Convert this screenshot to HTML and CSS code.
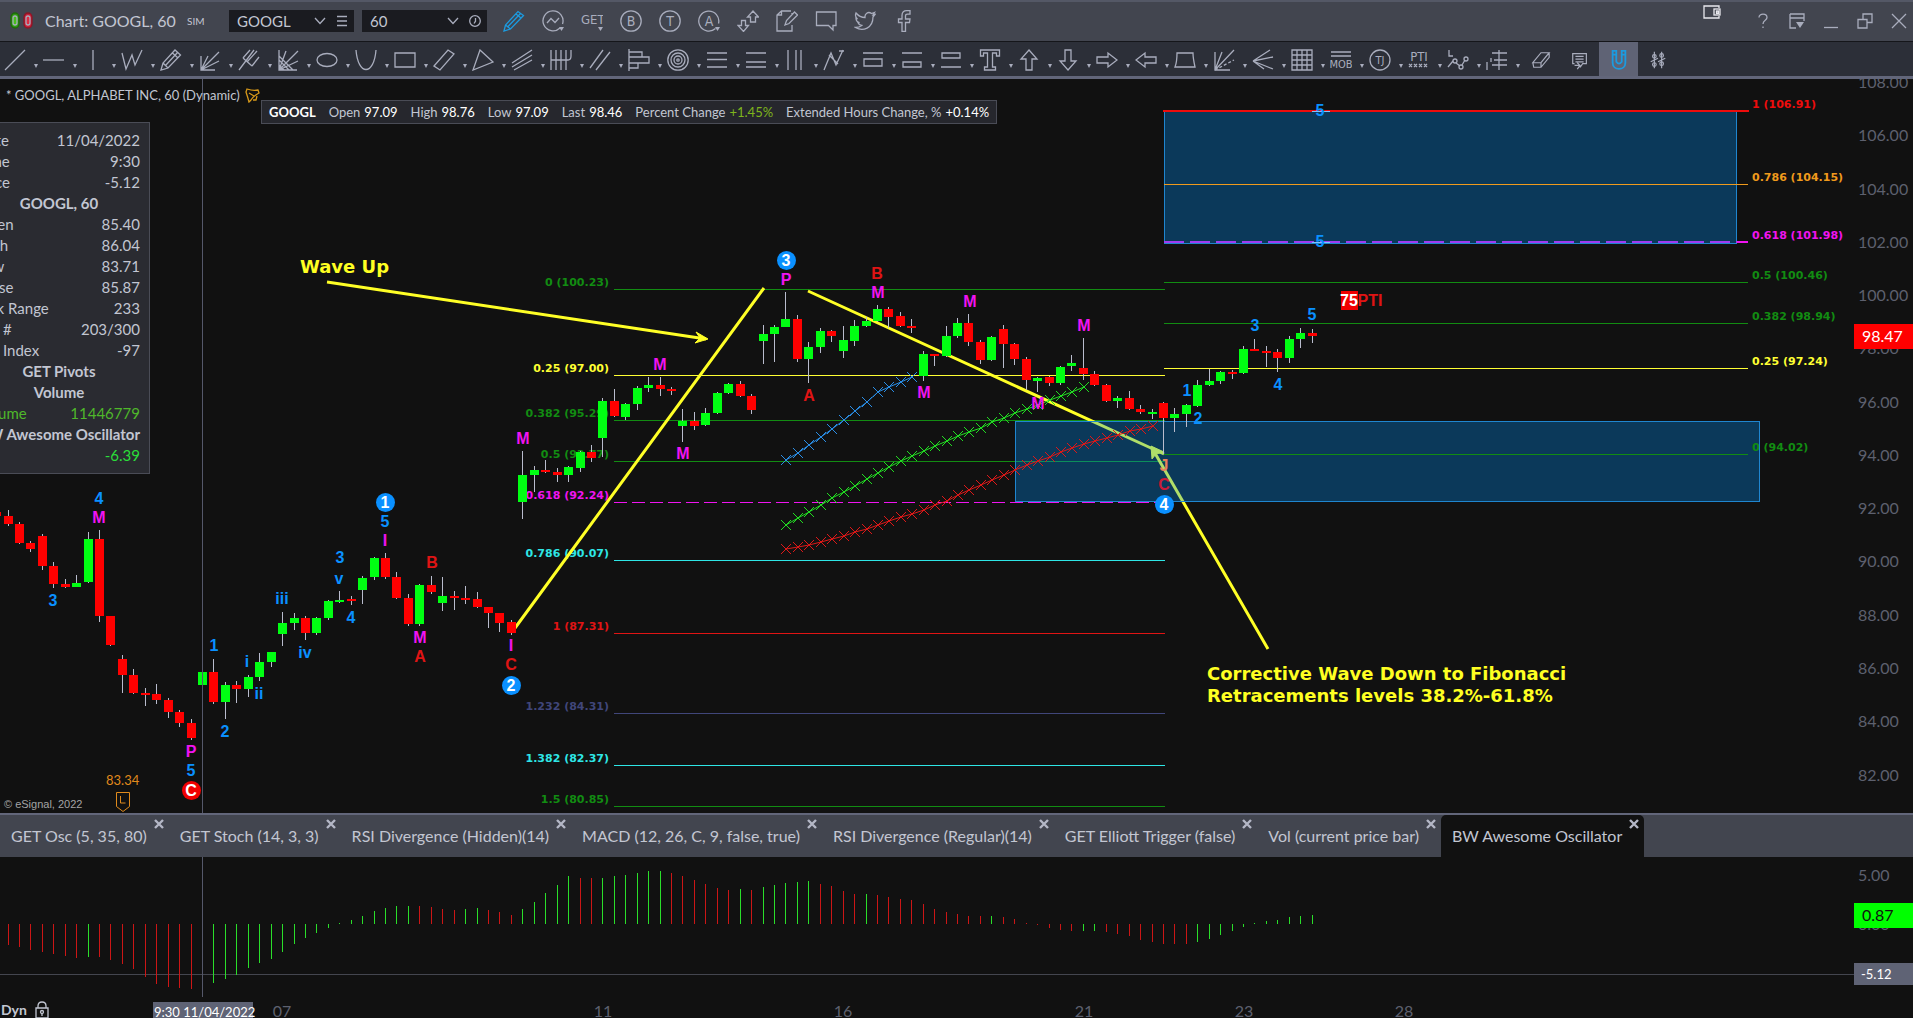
FILE: index.html
```
<!DOCTYPE html>
<html lang="en">
<head>
<meta charset="utf-8">
<title>Chart: GOOGL, 60</title>
<link rel="stylesheet" href="styles.css">
</head>
<body>
<header class="titlebar">
  <svg class="link-pills" viewBox="0 0 24 18" aria-hidden="true">
    <rect x="1" y="1" width="8" height="15" rx="4" fill="#2f9a12" stroke="#1d6a0a"/><rect x="3" y="4" width="4" height="9" rx="2" fill="#48c01c"/>
    <rect x="14" y="1" width="8" height="15" rx="4" fill="#c81e38" stroke="#8a1626"/><rect x="16" y="4" width="4" height="9" rx="2" fill="#e02a42"/>
  </svg>
  <h1 class="title">Chart: GOOGL, 60</h1>
  <span class="sim">SIM</span>
  <div class="picker symbol">
    <select aria-label="Symbol"><option>GOOGL</option></select>
    <svg class="chev" viewBox="0 0 12 8"><path d="M1 1l5 5.500 5-5.500"/></svg>
    <svg class="mini" viewBox="0 0 12 12"><path d="M1 1.500h10M1 6h10M1 10.500h10"/></svg>
  </div>
  <div class="picker interval">
    <select aria-label="Interval"><option>60</option></select>
    <svg class="chev" viewBox="0 0 12 8"><path d="M1 1l5 5.500 5-5.500"/></svg>
    <svg class="mini" viewBox="0 0 12 12"><circle cx="6" cy="6" r="5.300"/><path d="M6.500 3v3.200L5 8.500"/></svg>
  </div>
  <div class="actions">
    <button class="icon on" aria-label="Draw"><svg viewBox="0 0 22 22"><path d="M1 21l1.500-6L15 1.500l5.500 4L7.500 19zM2.500 15l5 4M5 16.500L17.500 3.500M13 4l5 4"/></svg></button>
    <button class="icon" aria-label="Studies"><svg viewBox="0 0 22 22"><path d="M18 18a10 10 0 1 1 2.500-4M5 13l4-4.500 4 4 4-4.500"/><path class="f" d="M17 17h5l-2.500 4z"/></svg></button>
    <button class="icon" aria-label="GET"><svg viewBox="0 0 22 22"><text x="0" y="14" font-size="13">GET</text><path class="f" d="M17 17h5l-2.500 4z"/></svg></button>
    <button class="icon" aria-label="Buy"><svg viewBox="0 0 22 22"><circle cx="11" cy="11" r="10.200"/><text x="11" y="16" font-size="14" text-anchor="middle">B</text></svg></button>
    <button class="icon" aria-label="Trade"><svg viewBox="0 0 22 22"><circle cx="11" cy="11" r="10.200"/><text x="11" y="16" font-size="14" text-anchor="middle">T</text></svg></button>
    <button class="icon" aria-label="Alerts"><svg viewBox="0 0 22 22"><path d="M17.500 18.500a10 10 0 1 1 3-5"/><text x="11" y="16" font-size="14" text-anchor="middle">A</text><path class="f" d="M17 17h5l-2.500 4z"/></svg></button>
    <button class="icon" aria-label="Orders"><svg viewBox="0 0 22 22"><path d="M13.500 12V7H10.500L16 1l5.500 6H18.500v5zM4.500 10.500h4v5h3L6.500 21.500 1 15.500h3.500z"/></svg></button>
    <button class="icon" aria-label="Notes"><svg viewBox="0 0 22 22"><path d="M10 1H5.500L1 5v16h15v-6M5.500 1v4H1M16 3v1M10 1h5M9 15l1.500-4.500L18.500 2 21.500 5 13 13.500z"/></svg></button>
    <button class="icon" aria-label="Chat"><svg viewBox="0 0 22 22"><path d="M1.500 2h19.500v13.500h-3v4.500l-4.500-4.500h-12z"/></svg></button>
    <button class="icon" aria-label="Twitter"><svg viewBox="0 0 22 22"><path d="M21 4.500l-2 .5 1.500-2.500-3 1C14 1 10.500 4 11 7.500 7.500 7.500 4.500 6 2 3c-1 2.500-.5 4.500 1.500 6L2 8.500c0 2 1.500 3.500 3.500 4.200H4c.6 1.500 2 2.500 3.700 2.800C6 17 4 17.500 1.500 17.500 9 22 19 18 19 7z"/></svg></button>
    <button class="icon" aria-label="Facebook"><svg viewBox="0 0 22 22"><path d="M9 21.500v-9H5.500V9H9V5.500C9 2 11 .7 13.500.7H17v3.500h-2.500c-1.500 0-2 .6-2 1.800v3H17l-.5 3.500h-4v9z"/></svg></button>
  </div>
  <svg class="detach" viewBox="0 0 18 14"><path d="M16 3V1H1v12h15v-2"/><rect x="11" y="4" width="6" height="6"/><rect x="13.500" y="6" width="2" height="2.500"/></svg>
  <div class="window">
    <button class="icon" aria-label="Help"><svg viewBox="0 0 16 16"><path d="M4 4.500C4 0 12 0 12 4.500 12 7.500 8 7 8 11M8 13.500V15"/></svg></button>
    <button class="icon" aria-label="Menu"><svg viewBox="0 0 16 16"><path d="M1 1h14v7M1 1v14h6M1 5h14"/><path class="f" d="M7 9h8l-4 6z"/></svg></button>
    <button class="icon" aria-label="Minimize"><svg viewBox="0 0 16 16"><path d="M1 14.500h14"/></svg></button>
    <button class="icon" aria-label="Restore"><svg viewBox="0 0 16 16"><path d="M1 6.500h9V15H1zM6 6.500V1h9v8.500h-5"/></svg></button>
    <button class="icon" aria-label="Close"><svg viewBox="0 0 16 16"><path d="M1 1l14 14M15 1L1 15"/></svg></button>
  </div>
</header>

<nav class="tools" aria-label="Drawing tools">
  <button class="tool" aria-label="Line"><svg viewBox="0 0 22 22"><path d="M1 21L21 1"/></svg></button>
  <button class="tool" aria-label="Horizontal line"><svg viewBox="0 0 22 22"><path d="M0 11h21"/></svg></button>
  <button class="tool" aria-label="Vertical line"><svg viewBox="0 0 22 22"><path d="M11 1v20"/></svg></button>
  <button class="tool" aria-label="Polyline"><svg viewBox="0 0 22 22"><path d="M1 4l4 16 6-14 3 10L21 1"/></svg></button>
  <button class="tool" aria-label="Freehand"><svg viewBox="0 0 22 22"><path d="M1 21l2-7L15 1l5.500 5L8 19zM3 14l5 5M5.500 16.500L17.500 3.500M12.500 4l5.500 5"/></svg></button>
  <button class="tool" aria-label="Gann fan"><svg viewBox="0 0 22 22"><path d="M2 7v14h14M2 21L9 7M2 21L20 3M2 21l18-9"/></svg></button>
  <button class="tool" aria-label="Pitchfork"><svg viewBox="0 0 22 22"><path d="M1 21L16 1M5 9l9 8M5 9L12 1M14 17l7-9M9 13L19 2"/></svg></button>
  <button class="tool" aria-label="Speed fan"><svg viewBox="0 0 22 22"><path d="M2 1v20h18M2 21L9 2M2 21L21 2M2 21l19-9M2 16l5 5M2 11l10 10M2 7l14 14"/></svg></button>
  <button class="tool" aria-label="Ellipse"><svg viewBox="0 0 22 22"><ellipse cx="11" cy="11" rx="10" ry="6.500"/></svg></button>
  <button class="tool" aria-label="Parabola"><svg viewBox="0 0 22 22"><path d="M1 1C3 27 19 27 21 1"/></svg></button>
  <button class="tool" aria-label="Rectangle"><svg viewBox="0 0 22 22"><path d="M1 4h20v14H1z"/></svg></button>
  <button class="tool" aria-label="Channel box"><svg viewBox="0 0 22 22"><path d="M1 17L15 1l6 4L7 21z"/></svg></button>
  <button class="tool" aria-label="Triangle"><svg viewBox="0 0 22 22"><path d="M8 1l13 12L1 21z"/></svg></button>
  <button class="tool" aria-label="Regression"><svg viewBox="0 0 22 22"><path d="M1 14L21 1M1 18L21 6M3 21L21 11"/></svg></button>
  <button class="tool" aria-label="Cycles"><svg viewBox="0 0 22 22"><path d="M1 1v20M6 1v20M11 1v20M16 1v20M1 11h17q3 0 3-4V1"/></svg></button>
  <button class="tool" aria-label="Parallel lines"><svg viewBox="0 0 22 22"><path d="M1 19L14 1M7 21L21 3"/></svg></button>
  <button class="tool" aria-label="Profile"><svg viewBox="0 0 22 22"><path d="M1 0v22M1 3h13v5H1M1 8h20v6H1M1 14h9v5H1"/></svg></button>
  <button class="tool" aria-label="Circles"><svg viewBox="0 0 22 22"><circle cx="11" cy="11" r="10.200"/><circle cx="11" cy="11" r="7"/><circle cx="11" cy="11" r="4"/><circle cx="11" cy="11" r="1.200"/></svg></button>
  <button class="tool" aria-label="Retracement"><svg viewBox="0 0 22 22"><path d="M1 4h20M1 10.500h20M1 18h20"/></svg></button>
  <button class="tool" aria-label="Extension"><svg viewBox="0 0 22 22"><path d="M1 4h20M1 13h20M1 18h20"/></svg></button>
  <button class="tool" aria-label="Time zones"><svg viewBox="0 0 22 22"><path d="M4 1v20M12 1v20M17 1v20"/></svg></button>
  <button class="tool" aria-label="Zigzag"><svg viewBox="0 0 22 22"><path d="M1 21L8 4l5 12L20 1M6 6l9 9M16 2h5"/></svg></button>
  <button class="tool" aria-label="Projection one"><svg viewBox="0 0 22 22"><path d="M1 4h20M2 10h18v7H2z"/></svg></button>
  <button class="tool" aria-label="Projection two"><svg viewBox="0 0 22 22"><path d="M1 4h20M2 13h18v5H2z"/></svg></button>
  <button class="tool" aria-label="Projection three"><svg viewBox="0 0 22 22"><path d="M2 4h18v5H2zM1 18h20"/></svg></button>
  <button class="tool" aria-label="Text"><svg viewBox="0 0 22 22"><path d="M1.500 1h19v6h-3V4h-4v14h3v3h-11v-3h3V4h-4v3h-3z"/></svg></button>
  <button class="tool" aria-label="Up arrow"><svg viewBox="0 0 22 22"><path d="M11 1l8 9h-5v11H8V10H3z"/></svg></button>
  <button class="tool" aria-label="Down arrow"><svg viewBox="0 0 22 22"><path d="M11 21l8-9h-5V1H8v11H3z"/></svg></button>
  <button class="tool" aria-label="Right arrow"><svg viewBox="0 0 22 22"><path d="M21 11l-9-7v4H1v6h11v4z"/></svg></button>
  <button class="tool" aria-label="Left arrow"><svg viewBox="0 0 22 22"><path d="M1 11l9-7v4h11v6H10v4z"/></svg></button>
  <button class="tool" aria-label="Rectangle note"><svg viewBox="0 0 22 22"><path d="M3 4h16q0 5 2 14H1Q3 13 3 4z"/></svg></button>
  <button class="tool" aria-label="Angles"><svg viewBox="0 0 22 22"><path d="M2 3v18h15M2 21L9 3M2 21L21 1"/><path stroke-dasharray="3 2" d="M2 21l19-10"/></svg></button>
  <button class="tool" aria-label="Ray fan"><svg viewBox="0 0 22 22"><path d="M1 12L18 1M1 12L21 8M1 12l20 8M1 12l11 8"/></svg></button>
  <button class="tool" aria-label="Grid"><svg viewBox="0 0 22 22"><path d="M1 1h20v20H1zM1 6h20M1 11h20M1 16h20M6 1v20M11 1v20M16 1v20"/></svg></button>
  <button class="tool" aria-label="MOB"><svg viewBox="0 0 22 22"><path d="M1 3h20M1 7h20"/><text x="11" y="19" font-size="11" text-anchor="middle">MOB</text></svg></button>
  <button class="tool" aria-label="TJ"><svg viewBox="0 0 22 22"><circle cx="11" cy="11" r="10"/><text x="11" y="15" font-size="11" text-anchor="middle">TJ</text></svg></button>
  <button class="tool" aria-label="PTI"><svg viewBox="0 0 22 22"><text x="11" y="12" font-size="13" text-anchor="middle">PTI</text><path d="M1 15l3 3m0-3l-3 3M6 15l3 3m0-3l-3 3M11 15l3 3m0-3l-3 3M16 15l3 3m0-3l-3 3"/></svg></button>
  <button class="tool" aria-label="Elliott labels"><svg viewBox="0 0 22 22"><path d="M2 1v6h4M1 18l5-6M9 14l4 3M15 16l3-5"/><circle cx="8" cy="12" r="2"/><circle cx="14" cy="18" r="2"/><circle cx="19" cy="10" r="2"/></svg></button>
  <button class="tool" aria-label="Price clusters"><svg viewBox="0 0 22 22"><path d="M13 1v20M6 4h15M8 11h13M6 16h15M1 13v8M5 9v4"/></svg></button>
  <button class="tool plain" aria-label="Erase"><svg viewBox="0 0 22 22"><path d="M2 14L11 3h9L11 14zM2 14l1 5h8l9-11V3M11 14v5"/></svg></button>
  <button class="tool plain" aria-label="Comments"><svg viewBox="0 0 22 22"><path d="M5 15H3V4h15v11h-4l-3 4M6 7h9M6 10h9M6 13h9M5 17h6M8 14l3 3-3 4"/></svg></button>
  <button class="tool plain on" aria-label="Magnet"><svg viewBox="0 0 22 22"><path d="M4 1h4v12q3 4 6 0V1h4v13c0 9-14 9-14 0zM4 5h4M14 5h4"/></svg></button>
  <button class="tool plain" aria-label="Settings"><svg viewBox="0 0 22 22"><path d="M7 2v18M15 2v18M3 13l8-4M11 13l8-4"/><circle cx="7" cy="7" r="2"/><circle cx="7" cy="16" r="2"/><circle cx="15" cy="6" r="2"/><circle cx="15" cy="15" r="2"/></svg></button>
</nav>

<main class="workspace">
  <section class="pane price">
    <svg class="plot" id="price-plot" role="img" aria-label="GOOGL 60 minute candles"></svg>
    <svg class="scale" id="price-scale"></svg>
    <div class="crosshair"></div>
    <div class="heading">
      <span>* GOOGL, ALPHABET INC, 60 (Dynamic)</span>
      <svg class="bell" viewBox="0 0 15 15"><path d="M1 4c1 3 2 6 3 10l2-2c2-3 4-5 8-7l-1-3C9 3 5 2 2 1zM4 5l5 3M8 12l3 0 1-4"/></svg>
    </div>
    <dl class="quote">
      <div><dt class="sym">GOOGL</dt></div>
      <div><dt>Open</dt><dd>97.09</dd></div>
      <div><dt>High</dt><dd>98.76</dd></div>
      <div><dt>Low</dt><dd>97.09</dd></div>
      <div><dt>Last</dt><dd>98.46</dd></div>
      <div><dt>Percent Change</dt><dd class="up">+1.45%</dd></div>
      <div><dt>Extended Hours Change, %</dt><dd>+0.14%</dd></div>
    </dl>
    <table class="cursor">
      <tr><th>Date</th><td>11/04/2022</td></tr>
      <tr><th>Time</th><td>9:30</td></tr>
      <tr><th>Price</th><td>-5.12</td></tr>
      <tr><th class="group" colspan="2">GOOGL, 60</th></tr>
      <tr><th>Open</th><td>85.40</td></tr>
      <tr><th>High</th><td>86.04</td></tr>
      <tr><th>Low</th><td>83.71</td></tr>
      <tr><th>Close</th><td>85.87</td></tr>
      <tr><th>Tick Range</th><td>233</td></tr>
      <tr><th>Bar #</th><td>203/300</td></tr>
      <tr><th>Bar Index</th><td>-97</td></tr>
      <tr><th class="group" colspan="2">GET Pivots</th></tr>
      <tr><th class="group" colspan="2">Volume</th></tr>
      <tr class="vol"><th>Volume</th><td>11446779</td></tr>
      <tr><th class="group" colspan="2">BW Awesome Oscillator</th></tr>
      <tr class="osc"><th></th><td>-6.39</td></tr>
    </table>
    <small class="copyright">© eSignal, 2022</small>
  </section>

  <div class="tabs">
    <div class="tab"><button>GET Osc (5, 35, 80)</button><button class="x" aria-label="Close tab"><svg viewBox="0 0 10 10"><path d="M1 1l8 8M9 1L1 9"/></svg></button></div>
    <div class="tab"><button>GET Stoch (14, 3, 3)</button><button class="x" aria-label="Close tab"><svg viewBox="0 0 10 10"><path d="M1 1l8 8M9 1L1 9"/></svg></button></div>
    <div class="tab"><button>RSI Divergence (Hidden)(14)</button><button class="x" aria-label="Close tab"><svg viewBox="0 0 10 10"><path d="M1 1l8 8M9 1L1 9"/></svg></button></div>
    <div class="tab"><button>MACD (12, 26, C, 9, false, true)</button><button class="x" aria-label="Close tab"><svg viewBox="0 0 10 10"><path d="M1 1l8 8M9 1L1 9"/></svg></button></div>
    <div class="tab"><button>RSI Divergence (Regular)(14)</button><button class="x" aria-label="Close tab"><svg viewBox="0 0 10 10"><path d="M1 1l8 8M9 1L1 9"/></svg></button></div>
    <div class="tab"><button>GET Elliott Trigger (false)</button><button class="x" aria-label="Close tab"><svg viewBox="0 0 10 10"><path d="M1 1l8 8M9 1L1 9"/></svg></button></div>
    <div class="tab"><button>Vol (current price bar)</button><button class="x" aria-label="Close tab"><svg viewBox="0 0 10 10"><path d="M1 1l8 8M9 1L1 9"/></svg></button></div>
    <div class="tab active"><button>BW Awesome Oscillator</button><button class="x" aria-label="Close tab"><svg viewBox="0 0 10 10"><path d="M1 1l8 8M9 1L1 9"/></svg></button></div>
  </div>

  <section class="pane oscillator">
    <svg class="plot" id="osc-plot" role="img" aria-label="Awesome oscillator"></svg>
    <svg class="scale" id="osc-scale"></svg>
    <div class="crosshair"></div>
  </section>
</main>

<footer class="timeline">
  <strong class="dyn">Dyn</strong>
  <svg class="lock" viewBox="0 0 14 18"><path d="M3 7V5q0-4 4-4t4 4v2M1 7h12v10H1z"/><circle cx="7" cy="11" r="1.500"/><path d="M7 12v3"/></svg>
  <svg class="dates" id="dates"></svg>
</footer>
<script src="chart.js"></script>
</body>
</html>
```
FILE: styles.css
```
* { box-sizing: border-box; }
:root {
  --ink: #c2c6d2;
  --dim: #5d606e;
  --line: #a9adbd;
  --bar: #42454f;
  --rule: #62667a;
  --blue: #1c9be0;
  --ui: Lato, Carlito, sans-serif;
}
html, body { height: 100%; }
body {
  margin: 0;
  display: flex;
  flex-direction: column;
  overflow: hidden;
  background: #111;
  color: var(--ink);
  font: 15px/20px var(--ui);
}
button { margin: 0; padding: 0; border: 0; background: none; color: inherit; font: inherit; }
svg { display: block; flex: none; }

.titlebar {
  display: flex;
  align-items: center;
  flex: none;
  height: 42px;
  padding: 0 6px 2px 10px;
  border-top: 2px solid #545866;
  border-bottom: 1px solid #15161a;
  background: var(--bar);
}
.titlebar svg, .tools svg { fill: none; stroke: var(--line); stroke-width: 1.3; }
.titlebar svg text, .tools svg text { fill: var(--line); stroke: none; font-family: "Liberation Sans Narrow", "DejaVu Sans Condensed", sans-serif; }
.titlebar .f { fill: var(--line); stroke: none; }
.link-pills { width: 24px; height: 18px; }
.title { margin: 0 0 0 11px; width: 142px; font-size: 16px; font-weight: 400; white-space: nowrap; }
.sim { width: 42px; font-size: 10px; line-height: 12px; }
.picker { display: flex; align-items: center; gap: 10px; width: 125px; height: 22px; padding: 0 6px 0 8px; background: #1a1b20; }
.interval { margin-left: 8px; }
.picker select { flex: 1; min-width: 0; padding: 0; border: 0; appearance: none; background: none; color: var(--ink); font: 15px/20px var(--ui); }
.chev { width: 12px; height: 8px; }
.mini { width: 12px; height: 12px; }
.actions { display: flex; gap: 17px; margin-left: 16px; }
.actions svg { width: 22px; height: 22px; }
.titlebar .on svg, .tools .on svg { stroke: var(--blue); }
.tools .on svg { stroke-width: 2; }
.detach { width: 18px; height: 14px; margin: 0 34px 18px auto; }
.titlebar .detach { stroke: #e8e8ee; }
.window { display: flex; gap: 18px; }
.window svg { width: 16px; height: 16px; }

.tools {
  display: flex;
  flex: none;
  height: 37px;
  border-bottom: 3px solid var(--rule);
  background: #2c2f38;
  overflow: hidden;
}
.tool { display: flex; flex: none; align-items: center; width: 39px; padding: 2px 0 0 4px; }
.tool svg { width: 22px; height: 22px; }
.tool::after { content: ""; margin: 12px 0 0 8px; border: 2px solid transparent; border-top: 4px solid var(--line); border-bottom: 0; }
.tool.plain { justify-content: center; padding-left: 0; }
.tool.plain svg { width: 20px; height: 20px; }
.tool.plain::after { display: none; }
.tool.on { background: #5f6375; }

.workspace { display: flex; flex: 1; flex-direction: column; min-height: 0; }
.pane { position: relative; display: grid; grid-template-columns: 1fr 59px; min-height: 0; overflow: hidden; }
.price { flex: 734; }
.oscillator { flex: 140; }
.plot, .scale { width: 100%; height: 100%; min-height: 0; }
.crosshair { position: absolute; top: 0; bottom: 0; left: 202px; width: 1px; background: #55586a; }
.heading { position: absolute; top: 7px; left: 6px; display: flex; align-items: center; gap: 5px; font-size: 13px; line-height: 18px; }
.bell { width: 15px; height: 15px; fill: none; stroke: #d99a1a; stroke-width: 1.3; }
.quote {
  position: absolute;
  top: 21px;
  left: 261px;
  display: flex;
  gap: 13px;
  margin: 0;
  padding: 0 7px;
  border: 1px solid #4a4c56;
  background: #26272d;
  font-size: 13px;
  line-height: 22px;
  white-space: nowrap;
}
.quote div { display: flex; gap: 4px; }
.quote dd { margin: 0; color: #fff; }
.quote .sym { color: #fff; font-weight: 700; }
.quote .up { color: #7fb51c; }
.cursor {
  position: absolute;
  top: 43px;
  left: -32px;
  width: 181px;
  padding: 7px 0;
  border: 1px solid #4a4c56;
  background: #2a2b31;
  border-spacing: 0;
  line-height: 21px;
  white-space: nowrap;
}
.cursor th, .cursor td { height: 21px; padding: 0 9px 0 8px; font-weight: 400; text-align: left; }
.cursor th { padding-right: 0; }
.cursor td { text-align: right; }
.cursor .group { padding: 0; font-weight: 700; text-align: center; }
.cursor .vol { color: #4fb82a; }
.cursor .osc { color: #2ade3a; }
.copyright { position: absolute; bottom: 1px; left: 4px; color: #a4a4a4; font: 11px/16px "Liberation Sans", Arial, sans-serif; }

.tabs { display: flex; flex: none; height: 44px; border-top: 2px solid var(--rule); background: var(--bar); }
.tab { display: flex; flex: none; gap: 7px; padding: 4px 5px 4px 11px; font-size: 16px; white-space: nowrap; }
.tab .x { align-self: flex-start; }
.tab .x svg { width: 10px; height: 10px; fill: none; stroke: #b4b7c6; stroke-width: 2.4; }
.tab.active { border-radius: 5px 5px 0 0; background: #111; }

.timeline { display: flex; flex: none; height: 21px; padding-left: 1px; overflow: hidden; }
.dyn { width: 34px; margin-top: 3px; font-size: 14px; }
.lock { width: 14px; height: 18px; margin-top: 4px; fill: none; stroke: var(--ink); stroke-width: 1.3; }
.dates { flex: 1; height: 100%; margin-left: 1px; }

text { white-space: pre; }
.wave { font: 700 16px "Liberation Sans", Arial, sans-serif; text-anchor: middle; }
.fib { font: 700 11px "DejaVu Sans", Verdana, sans-serif; }
.note { font: 700 18px "DejaVu Sans", Verdana, sans-serif; fill: #ff2; }
.tick { font: 16px var(--ui); fill: var(--dim); }
.small { font: 13px var(--ui); }
.arrow { fill: none; stroke: #ffff26; stroke-width: 3; }
.zone { fill: #0096ff; fill-opacity: .31; stroke: #1f86d0; }
```
FILE: chart.js
```
const STEP = 11.44, ORIGIN = 202, PRICE_TOP = 79, OSC_TOP = 857;
const barX = k => Math.round(ORIGIN + STEP * k);
const UP = '#00ff12', DOWN = '#ff0000', GREEN = '#128c12', BLUE = '#0a90ff', PINK = '#f014f0', RED = '#e01414';

// colour, high, body top, body bottom, low; the first bar sits at index -18
const candles = `r512,512,516,516 r510,516,524,526 r522,524,543,544 r541,543,549,552 r534,536,566,570 r562,566,584,588 r579,584,587,588
g575,583,587,587 g532,539,582,583 r530,539,616,622 r616,616,645,646 r655,659,675,693 r669,675,693,694 r688,693,695,706 r684,694,700,704
r698,700,712,718 r710,712,723,727 r719,723,738,740 g668,672,685,730 r659,672,702,704 g682,685,702,719 r681,685,689,703 g675,677,689,697
g653,662,677,681 g652,652,662,667 g612,623,634,646 g613,618,623,630 r616,618,633,640 g617,618,633,635 g600,601,618,620 g591,600,602,603
r596,599,601,605 g576,578,590,604 g557,558,577,580 r553,558,577,579 r572,577,598,599 r594,598,624,626 g584,585,624,626 r576,585,592,594
g577,596,603,611 r591,596,598,610 r586,598,600,604 r592,599,607,608 r607,607,613,628 r613,613,623,632 r620,622,633,635 g451,475,502,519
g466,470,475,492 r460,470,472,473 r468,472,475,482 g466,467,475,482 g451,452,468,472 r445,452,458,462 g398,401,438,457 r389,401,416,417
g403,404,417,420 g386,388,404,410 g377,385,388,392 r377,385,389,396 r387,389,391,395 g409,421,426,442 r412,421,426,430 g408,413,425,426
g392,393,413,414 g383,384,393,394 r381,384,396,397 r394,396,410,414 g325,334,341,364 g325,327,334,362 g292,319,327,327 r315,319,359,362
g342,347,359,383 g328,331,347,353 r330,331,336,342 g326,340,351,358 g320,326,341,346 g317,321,326,327 g305,309,321,322 r307,309,317,328
r312,316,326,327 r319,326,328,333 g351,354,376,381 r354,354,356,366 g326,336,356,357 g318,323,336,338 r314,323,342,346 r340,342,360,364
g336,337,360,361 r325,329,344,368 r343,344,359,365 r357,359,380,390 g377,378,381,392 r376,377,383,386 g366,367,383,385 g355,363,366,371
r338,368,374,380 r371,374,385,386 r384,385,401,402 g396,398,401,408 r391,398,409,410 r405,409,412,414 g409,412,414,419 r402,403,418,454
g408,414,418,432 g404,405,414,427 g380,385,406,407 g369,381,385,386 g371,372,381,384 r370,372,374,379 g346,349,373,374 r339,349,351,351
r346,351,353,367 r349,352,358,372 g336,339,358,363 g328,333,339,348 r329,333,336,343`.split(/\s+/);

// colour and bar tip; the first bar sits at index -17
const histogram = `r945 r947 r950 r952 r954 r956 r958 g957 r957 r960 r964 r969 r977 r984 r987 r988 r989 g985 g983 g979 g975 g968 g963 g959 g952
g944 g938 g933 g928 g923 g920 g916 g911 g908 g906 g906 r906 r907 r909 r910 g909 g908 r910 r912 r915 g909 g902 g893 g885 g876 r878 r878 g878
g876 g875 g873 g871 g871 r873 r876 r880 r884 r888 r890 g889 r890 g887 g885 g883 g882 g881 r884 r886 r891 r894 g894 r895 r897 r899 r900 r904
r909 r912 r914 r916 r916 g916 r917 r919 r923 r925 r928 r930 r931 g931 g931 r932 r934 r936 r940 r942 r944 r944 r944 g942 g939 g935 g931 g927
g923 g921 g920 g917 g916 g915`.split(/\s+/);

const trails = {
  '#2a8ee6': [460,453,445,437,429,420,411,402,392,387,382,377],
  '#22dd22': [525,518,512,505,498,492,486,479,473,467,461,456,451,446,441,436,432,428,422,418,413,409,405,400,396,392,387],
  '#dd1818': [549,547,545,542,539,536,532,529,525,521,517,514,510,505,501,495,490,485,480,475,470,465,461,457,452,448,444,441,438,435,431,429,426]
};

const retracement = [
  ['0 (100.23)', 289, GREEN], ['0.25 (97.00)', 375, '#ffff33'], ['0.382 (95.29)', 420, GREEN], ['0.5 (93.77)', 461, GREEN],
  ['0.618 (92.24)', 502, PINK, '13 5'], ['0.786 (90.07)', 560, '#2ee6e6'], ['1 (87.31)', 633, RED],
  ['1.232 (84.31)', 713, '#40467a'], ['1.382 (82.37)', 765, '#2ee6e6'], ['1.5 (80.85)', 806, GREEN]
];
const projection = [
  ['1 (106.91)', 111, '#ee0c0c'], ['0.786 (104.15)', 184, '#f09a1c'], ['0.618 (101.98)', 242, PINK], ['0.5 (100.46)', 282, GREEN],
  ['0.382 (98.94)', 323, GREEN], ['0.25 (97.24)', 368, '#ffff33'], ['0 (94.02)', 454, GREEN]
];
const waves = [
  ['4',99,499,BLUE], ['M',99,518,PINK], ['3',53,601,BLUE], ['P',191,752,PINK], ['5',191,771,BLUE], ['1',214,646,BLUE], ['2',225,732,BLUE],
  ['i',247,662,BLUE], ['ii',259,694,BLUE], ['iii',282,599,BLUE], ['iv',305,653,BLUE], ['v',339,579,BLUE], ['3',340,558,BLUE], ['4',351,618,BLUE],
  ['I',385,541,PINK], ['5',385,522,BLUE], ['B',432,563,RED], ['M',420,638,PINK], ['A',420,657,RED], ['I',511,646,PINK], ['C',511,665,RED],
  ['M',523,439,PINK], ['M',660,365,PINK], ['M',683,454,PINK], ['P',786,280,PINK], ['B',877,274,RED], ['M',878,293,PINK], ['A',809,396,RED],
  ['M',970,302,PINK], ['M',924,393,PINK], ['M',1084,326,PINK], ['M',1038,404,PINK], ['J',1164,466,'#e8805a'], ['C',1164,485,'#cc1c38'],
  ['1',1187,391,BLUE], ['2',1198,419,BLUE], ['3',1255,326,BLUE], ['4',1278,385,BLUE], ['5',1312,315,BLUE], ['5',1320,111,BLUE], ['5',1320,242,BLUE]
];
const badges = [['C',191,790,'#f00000'], ['1',385,502,BLUE], ['2',511,685,BLUE], ['3',786,260,BLUE], ['4',1164,504,BLUE]];

const line = (x1, y1, x2, y2, c, extra = '') => `<line x1="${x1}" y1="${y1}" x2="${x2}" y2="${y2}" stroke="${c}" ${extra}/>`;
const text = (s, x, y, cls, c = '', extra = '') => `<text class="${cls}" x="${x}" y="${y}" ${c && `fill="${c}"`} ${extra}>${s}</text>`;

let art = '';
for (const [s, y, c, dash] of retracement) {
  art += text(s, 609, y - 3, 'fib', c, 'text-anchor="end"');
  art += line(614, y + .5, 1165, y + .5, c, dash ? `stroke-dasharray="${dash}"` : '');
}
art += '<path class="arrow" d="M515 628L764 288M808 291L1164 454"/>';
art += '<path class="arrow" d="M327 282L706 339M1268 649L1152 448"/>';
art += '<path fill="#ffff26" stroke="#ffff26" d="M696 332L708 339 695 343 700 338zM1151 446L1152 459 1156 454 1164 452z"/>';
art += '<rect class="zone" x="1164.5" y="111.5" width="572" height="132"/><rect class="zone" x="1015.5" y="421.5" width="744" height="80"/>';
for (const [s, y, c] of projection) {
  art += text(s, 1752, y - 3, 'fib', c);
  if (y === 242) {
    art += line(1164, y, 1737, y, '#a03cf0', 'stroke-width="2" stroke-dasharray="20 6"') + line(1737, y, 1748, y, PINK, 'stroke-width="2"');
  } else if (y === 111) art += line(1163, y, 1749, y, c, 'stroke-width="2"');
  else art += line(1164, y + .5, 1748, y + .5, c);
}
for (const y of [111, 242]) art += line(1312, y + .5, 1330, y + .5, '#7cc4ff');
for (const [c, ys] of Object.entries(trails)) {
  const pts = ys.map((y, i) => [barX(51 + i) + 1, y]);
  art += `<path fill="none" stroke="${c}" d="M${pts.map(p => p.join(' ')).join('L')}${pts.map(([x, y]) => `M${x - 5} ${y - 5}l10 10m0-10l-10 10`).join('')}"/>`;
}
candles.forEach((row, i) => {
  const [hi, top, bottom, lo] = row.slice(1).split(',').map(Number), x = barX(i - 18);
  art += line(x + .5, hi, x + .5, lo, i === 18 ? '#f4f080' : '#b9bccd');
  art += `<rect x="${x - 4}" y="${top}" width="9" height="${bottom - top}" fill="${row[0] === 'g' ? UP : DOWN}"/>`;
});
for (const [s, x, y, c] of waves) art += text(s, x, y + 5, 'wave', c);
for (const [s, x, y, c] of badges) art += `<circle cx="${x + .5}" cy="${y + .5}" r="9.500" fill="${c}"/>` + text(s, x, y + 6, 'wave', '#fff');
art += '<rect x="1341" y="291" width="17" height="19" fill="#f00000"/>' + text('75', 1349, 306, 'wave', '#fff') + text('PTI', 1370, 306, 'wave', RED);
art += text('83.34', 106, 785, 'small', '#e08a1c') + '<path fill="none" stroke="#e08a1c" d="M116.500 792.500h13v14l-6.500 5-6.500-5zM120.500 796v7h5"/>';
art += text('Wave Up', 300, 273, 'note') + text('Corrective Wave Down to Fibonacci', 1207, 680, 'note') + text('Retracements levels 38.2%-61.8%', 1207, 702, 'note');
document.getElementById('price-plot').innerHTML = `<g transform="translate(0 ${-PRICE_TOP})">${art}</g>`;

let scale = '';
for (let p = 108, y = 83; p >= 82; p -= 2, y += 53.27) scale += text(p.toFixed(2), 4, Math.round(y) + 5, 'tick');
scale += '<rect y="324" width="59" height="25" fill="#ff0000"/>' + text('98.47', 8, 342, 'tick', '', 'style="fill:#fff"');
document.getElementById('price-scale').innerHTML = `<g transform="translate(0 ${-PRICE_TOP})">${scale}</g>`;

let osc = '<line x1="0" y1="974.5" x2="100%" y2="974.5" stroke="#44464f"/>';
histogram.forEach((row, i) => {
  const x = barX(i - 17) + .5;
  osc += line(x, 924, x, +row.slice(1), row[0] === 'g' ? '#2ade2a' : '#cc1616');
});
document.getElementById('osc-plot').innerHTML = `<g transform="translate(0 ${-OSC_TOP})">${osc}</g>`;
document.getElementById('osc-scale').innerHTML = `<g transform="translate(0 ${-OSC_TOP})">${text('5.00', 4, 881, 'tick')}${text('0.00', 4, 930, 'tick')}
<rect y="903" width="59" height="25" fill="#00ff00"/>${text('0.87', 8, 921, 'tick', '', 'style="fill:#111"')}
<rect y="963" width="59" height="22" fill="#5f6375"/>${text('-5.12', 7, 979, 'small', '#fff')}</g>`;

const days = [['07', 282], ['11', 603], ['16', 843], ['21', 1084], ['23', 1244], ['28', 1404]];
document.getElementById('dates').innerHTML = '<rect x="103" y="5" width="100" height="16" fill="#5f6375"/>' + text('9:30 11/04/2022', 104, 20, 'small', '#fff') +
  days.map(([s, x]) => text(s, x - 50, 20, 'tick', '', 'text-anchor="middle"')).join('');
```
